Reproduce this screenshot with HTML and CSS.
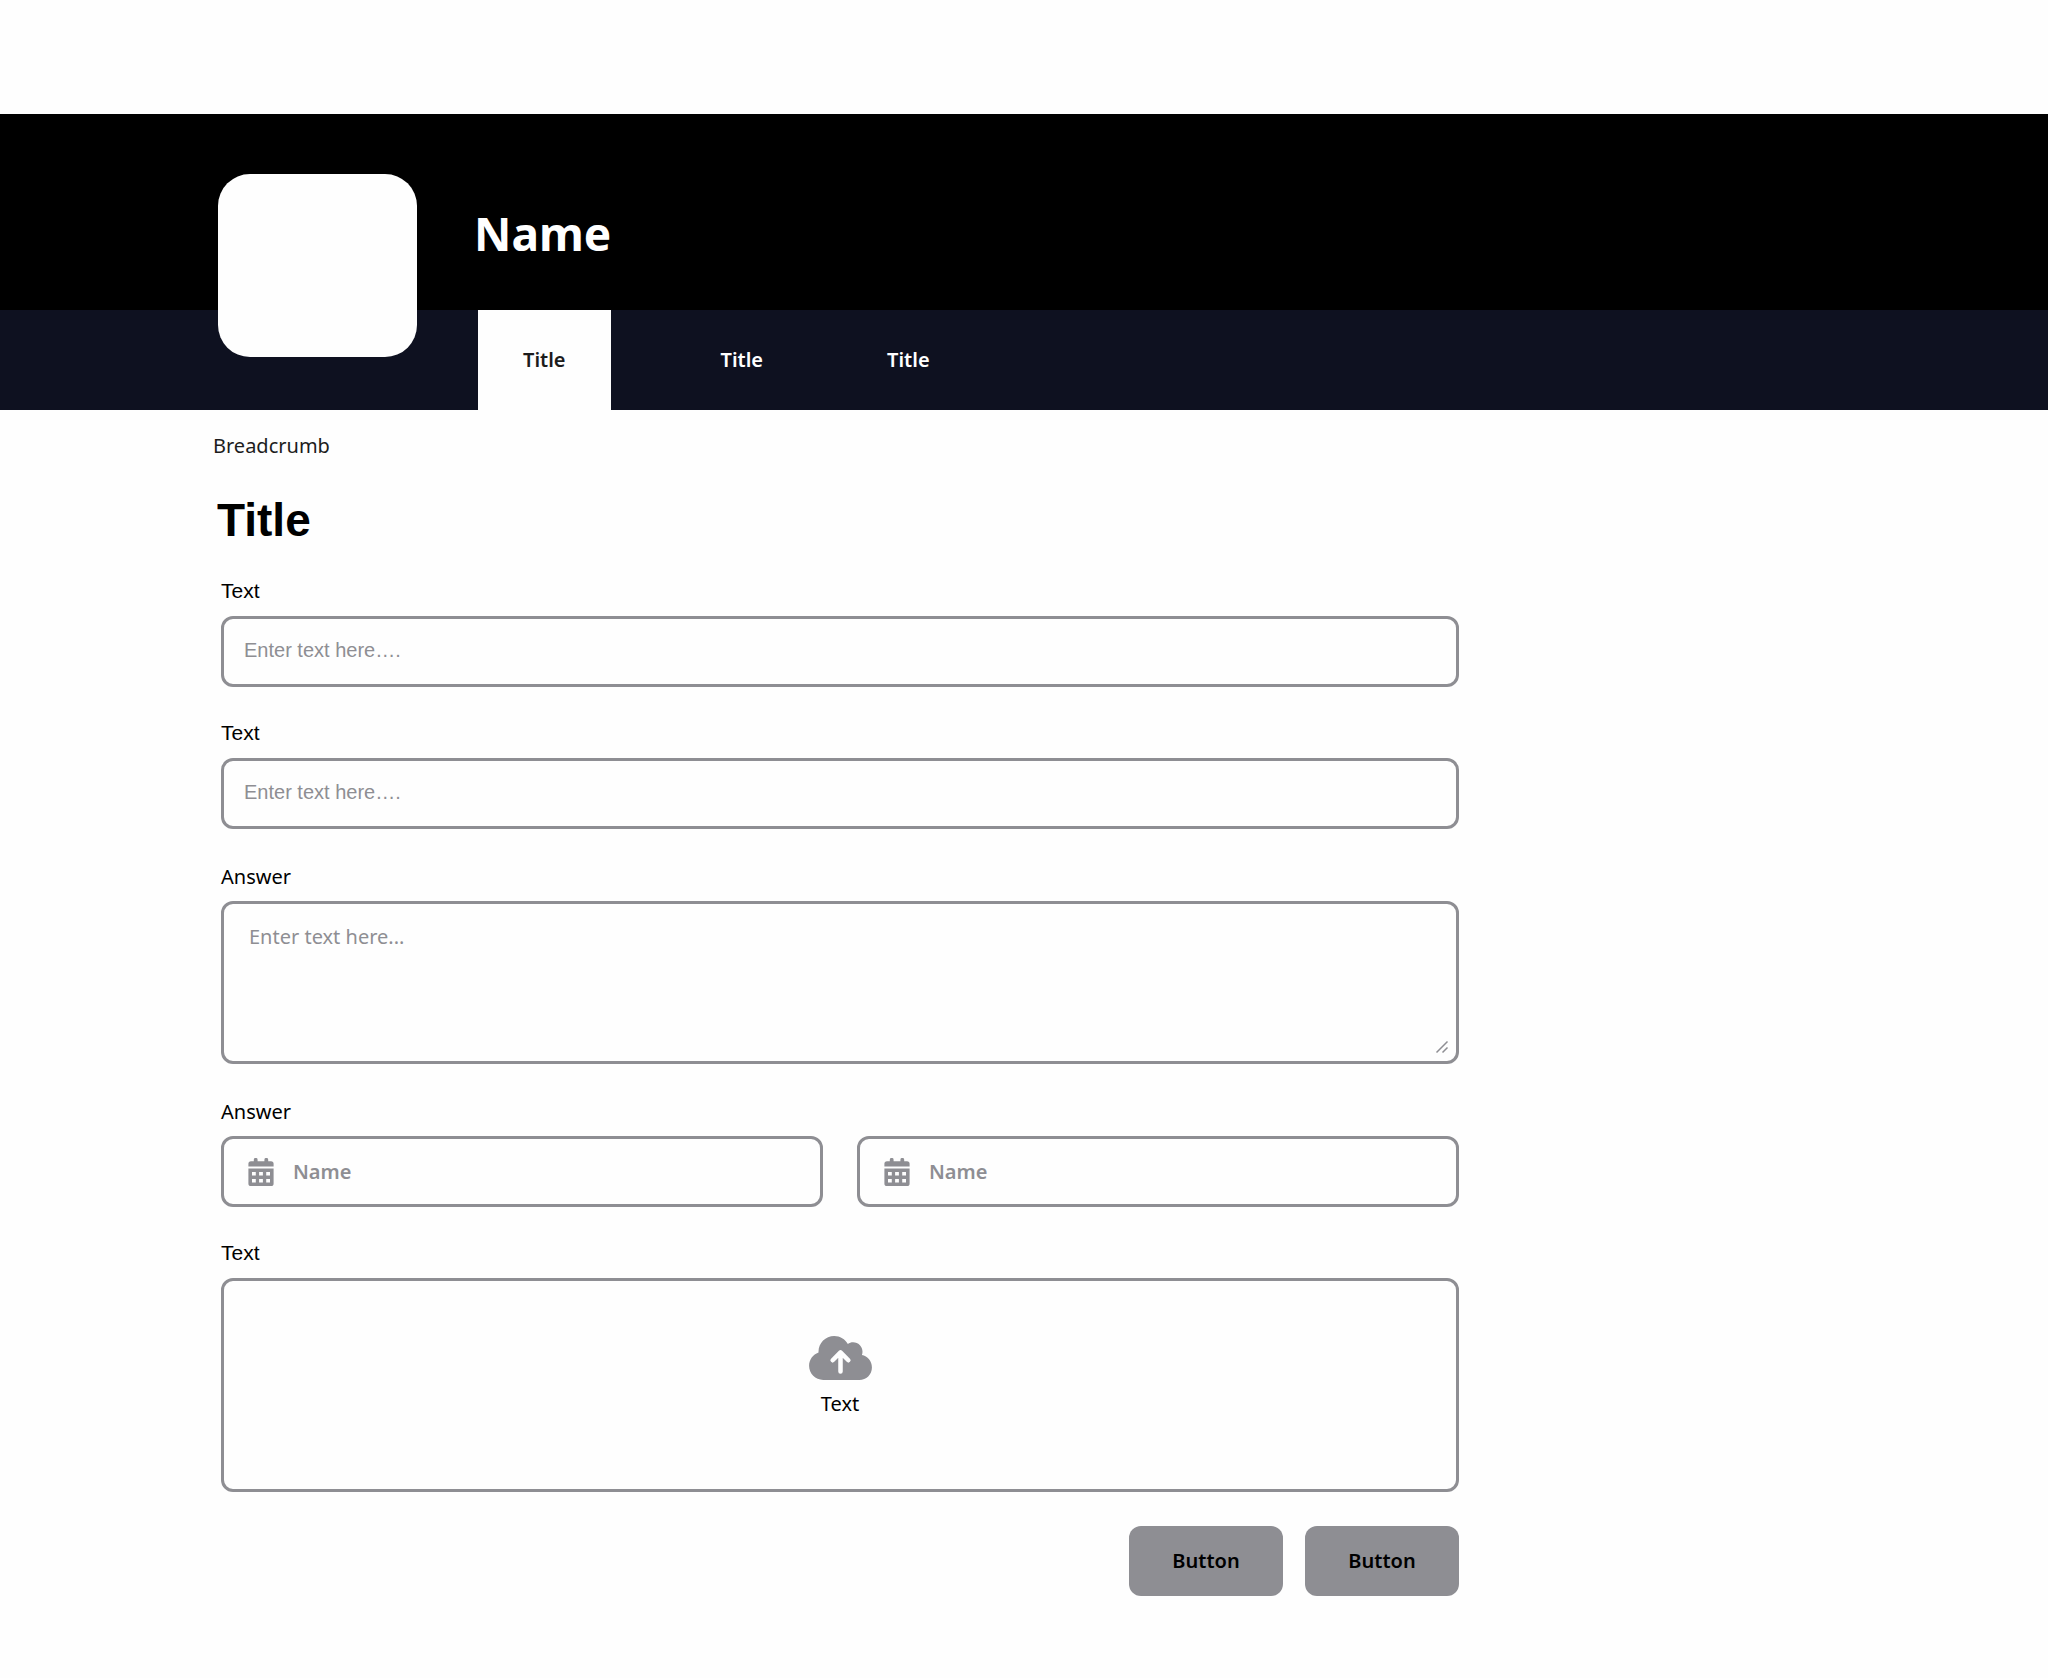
FILE: index.html
```
<!DOCTYPE html>
<html lang="en">
<head>
    <meta charset="UTF-8">
    <meta name="viewport" content="width=device-width, initial-scale=1.0">
    <title>Name</title>
    <link rel="stylesheet" href="styles.css">
</head>
<body>
    <header class="header">
        <div class="banner">
            <div class="logo"></div>
            <p class="name">Name</p>
        </div>
        <nav class="tabs">
            <a class="tab active" href="#" aria-current="page">Title</a>
            <a class="tab" href="#">Title</a>
            <a class="tab" href="#">Title</a>
        </nav>
    </header>

    <main class="content">
        <nav class="breadcrumb"><a href="#">Breadcrumb</a></nav>
        <h1>Title</h1>

        <form class="form">
            <div class="field">
                <label class="alt" for="text1">Text</label>
                <input class="box text-input" type="text" id="text1" placeholder="Enter text here….">
            </div>

            <div class="field">
                <label class="alt" for="text2">Text</label>
                <input class="box text-input" type="text" id="text2" placeholder="Enter text here….">
            </div>

            <div class="field">
                <label class="answer" for="answer">Answer</label>
                <div class="textarea-wrap">
                    <textarea class="box" id="answer" placeholder="Enter text here..."></textarea>
                    <svg class="grip" viewBox="0 0 14 14" aria-hidden="true">
                        <path d="M1.5 12.5 12.5 1.5M7.5 12.5 12.5 7.5"/>
                    </svg>
                </div>
            </div>

            <div class="field">
                <label class="answer" id="dates-label" for="from">Answer</label>
                <div class="dates">
                    <div class="box date">
                        <svg class="calendar" viewBox="0 0 26 28" aria-hidden="true">
                            <path d="M5.8 3.2V1.8a1.9 1.9 0 0 1 3.8 0v1.4h6.8V1.8a1.9 1.9 0 0 1 3.8 0v1.4h2.8a2.6 2.6 0 0 1 2.6 2.6v2.8H.4V5.8A2.6 2.6 0 0 1 3 3.2z"/>
                            <path fill-rule="evenodd" d="M.4 10.4h25.2v15a2.6 2.6 0 0 1-2.6 2.6H3a2.6 2.6 0 0 1-2.6-2.6zM4 14v3.6h3.8V14zm7.1 0v3.6h3.8V14zm7.1 0v3.6H22V14zM4 21v3.6h3.8V21zm7.1 0v3.6h3.8V21zm7.1 0v3.6H22V21z"/>
                        </svg>
                        <input type="text" id="from" placeholder="Name">
                    </div>
                    <div class="box date">
                        <svg class="calendar" viewBox="0 0 26 28" aria-hidden="true">
                            <path d="M5.8 3.2V1.8a1.9 1.9 0 0 1 3.8 0v1.4h6.8V1.8a1.9 1.9 0 0 1 3.8 0v1.4h2.8a2.6 2.6 0 0 1 2.6 2.6v2.8H.4V5.8A2.6 2.6 0 0 1 3 3.2z"/>
                            <path fill-rule="evenodd" d="M.4 10.4h25.2v15a2.6 2.6 0 0 1-2.6 2.6H3a2.6 2.6 0 0 1-2.6-2.6zM4 14v3.6h3.8V14zm7.1 0v3.6h3.8V14zm7.1 0v3.6H22V14zM4 21v3.6h3.8V21zm7.1 0v3.6h3.8V21zm7.1 0v3.6H22V21z"/>
                        </svg>
                        <input type="text" id="to" placeholder="Name" aria-labelledby="dates-label">
                    </div>
                </div>
            </div>

            <div class="field">
                <label class="alt" for="file">Text</label>
                <label class="box upload" for="file">
                    <svg class="cloud" viewBox="0 0 640 448" aria-hidden="true">
                        <path d="M144 448C64.500 448 0 383.500 0 304c0-62.800 40.200-116.200 96.200-135.900-.1-2.700-.2-5.400-.2-8.100C96 71.600 167.600 0 256 0c59.300 0 111 32.200 138.700 80.200C409.900 70 428.300 64 448 64c53 0 96 43 96 96 0 12.200-2.300 23.800-6.400 34.600C596 206.400 640 258.100 640 320c0 70.700-57.300 128-128 128z"/>
                        <path class="arrow" d="M320 362V170M240 247l80-80 80 80"/>
                    </svg>
                    <span>Text</span>
                </label>
                <input class="file-input" type="file" id="file">
            </div>

            <div class="actions">
                <button type="button">Button</button>
                <button type="button">Button</button>
            </div>
        </form>
    </main>
</body>
</html>
```

FILE: styles.css
```
* {
    box-sizing: border-box;
}
body {
    margin: 0;
    font-family: "Noto Sans", sans-serif;
    font-size: 20px;
    line-height: 28px;
    color: #000;
    background-color: #fefefe;
}
a {
    color: inherit;
    text-decoration: none;
}

/* Header */
.header {
    margin-top: 114px;
}
.banner {
    position: relative;
    display: flex;
    align-items: center;
    height: 196px;
    padding: 0 24px 0 474px;
    background-color: #000;
}
.logo {
    position: absolute;
    top: 60px;
    left: 218px;
    width: 199px;
    height: 183px;
    border-radius: 32px;
    background-color: #fefefe;
}
.name {
    margin: 0;
    padding-top: 42px;
    font-size: 46px;
    line-height: 64px;
    font-weight: 700;
    color: #fff;
}
.tabs {
    display: flex;
    height: 100px;
    padding-left: 478px;
    background-color: #0e1120;
}
.tab {
    display: flex;
    align-items: center;
    padding: 0 62px;
    font-weight: 600;
    color: #fff;
}
.tab.active {
    margin-right: 48px;
    padding: 0 45px;
    color: #1c1c1c;
    background-color: #fefefe;
}

/* Content */
.content {
    max-width: 1483px;
    padding: 22px 24px 80px 221px;
}
.breadcrumb {
    margin-left: -8px;
    color: #1c1c1c;
}
h1 {
    margin: 32px 0 28px -4px;
    font-family: "Liberation Sans", Arial, sans-serif;
    font-size: 46px;
    line-height: 56px;
    font-weight: 700;
}
.form {
    display: flex;
    flex-direction: column;
    gap: 31px;
}
.field {
    display: flex;
    flex-direction: column;
    gap: 10px;
}
.alt {
    font-family: "Liberation Sans", Arial, sans-serif;
    font-size: 21px;
    line-height: 30px;
}
.answer {
    padding-top: 3px;
}
.box {
    display: block;
    width: 100%;
    border: 3px solid #8e8e93;
    border-radius: 12px;
    background-color: #fefefe;
}
input,
textarea {
    font: inherit;
    color: #000;
}
::placeholder {
    color: #8e8e93;
    opacity: 1;
}
.text-input {
    height: 71px;
    padding: 0 20px 2px;
    font-family: "Liberation Sans", Arial, sans-serif;
}
.textarea-wrap {
    position: relative;
}
textarea {
    height: 163px;
    padding: 19px 25px;
    resize: none;
}
.grip {
    position: absolute;
    right: 10px;
    bottom: 10px;
    width: 14px;
    height: 14px;
    fill: none;
    stroke: #8e8e93;
    stroke-width: 1.5;
}
.dates {
    display: grid;
    grid-template-columns: 1fr 1fr;
    gap: 34px;
}
.date {
    display: flex;
    align-items: center;
    gap: 19px;
    height: 71px;
    padding: 0 24px;
}
.date input {
    flex: 1;
    min-width: 0;
    padding: 0;
    border: none;
    font-weight: 600;
    background: none;
    outline: none;
}
.calendar {
    width: 26px;
    height: 28px;
    fill: #8e8e93;
}
.upload {
    display: flex;
    flex-direction: column;
    align-items: center;
    justify-content: center;
    gap: 10px;
    height: 214px;
    padding-bottom: 16px;
    cursor: pointer;
}
.cloud {
    width: 63px;
    height: 44px;
    fill: #8e8e93;
}
.arrow {
    fill: none;
    stroke: #fefefe;
    stroke-width: 46;
    stroke-linecap: round;
    stroke-linejoin: round;
}
.file-input {
    display: none;
}
.actions {
    display: flex;
    justify-content: flex-end;
    gap: 22px;
    padding-top: 3px;
}
button {
    width: 154px;
    height: 70px;
    border: none;
    border-radius: 12px;
    font: inherit;
    font-weight: 600;
    color: #000;
    background-color: #8e8e93;
    cursor: pointer;
}
```
